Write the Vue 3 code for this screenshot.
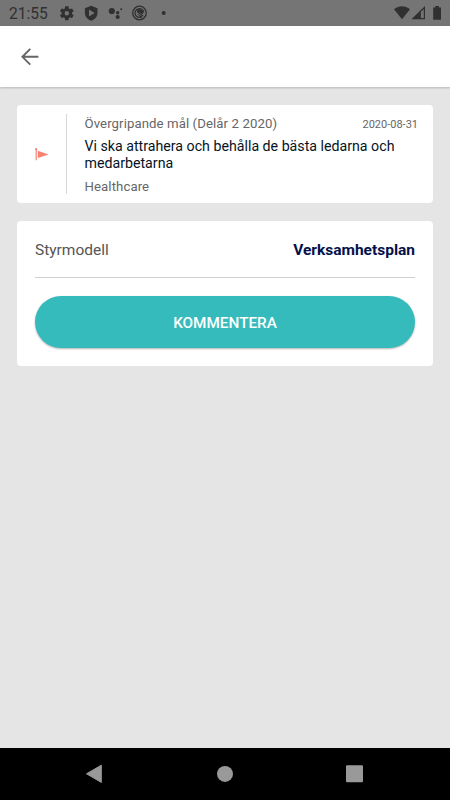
<script setup>
import { ref } from 'vue'

const goal = ref({
    period: 'Övergripande mål (Delår 2 2020)',
    date: '2020-08-31',
    title: 'Vi ska attrahera och behålla de bästa ledarna och medarbetarna',
    unit: 'Healthcare'
})

const details = ref([
    { label: 'Styrmodell', value: 'Verksamhetsplan' }
])
</script>

<template>
    <div class="screen">
        <div class="status-bar">
            <span class="clock">21:55</span>
            <svg class="status-left" width="112" height="26" viewBox="60 0 112 26">
                <!-- settings -->
                <g transform="translate(58.2 4.6) scale(0.72)">
                    <path fill-rule="evenodd" d="M19.14 12.94c.04-.3.06-.61.06-.94s-.02-.64-.07-.94l2.03-1.58a.49.49 0 0 0 .12-.61l-1.92-3.32a.49.49 0 0 0-.59-.22l-2.39.96a7 7 0 0 0-1.62-.94l-.36-2.54a.48.48 0 0 0-.48-.41h-3.84a.47.47 0 0 0-.47.41l-.36 2.54c-.59.24-1.13.57-1.62.94l-2.39-.96a.47.47 0 0 0-.59.22L2.74 8.87a.47.47 0 0 0 .12.61l2.03 1.58a6 6 0 0 0 0 1.88l-2.03 1.58a.49.49 0 0 0-.12.61l1.92 3.32c.12.22.37.29.59.22l2.39-.96c.5.38 1.03.7 1.62.94l.36 2.54c.05.24.24.41.48.41h3.84c.24 0 .44-.17.47-.41l.36-2.54c.59-.24 1.13-.56 1.62-.94l2.39.96c.22.08.47 0 .59-.22l1.92-3.32a.47.47 0 0 0-.12-.61zM12 15.1a3.1 3.1 0 1 1 0-6.2 3.1 3.1 0 0 1 0 6.2z" />
                </g>
                <!-- play protect -->
                <path fill-rule="evenodd" d="M91.2 5.7 97.5 8.2V13c0 3.8-2.7 6.4-6.3 7.7-3.6-1.3-6.3-3.9-6.3-7.7V8.2zM89 9.5v7l5.6-3.5z" />
                <!-- assistant -->
                <circle cx="111.8" cy="11" r="3.1" />
                <circle cx="117.7" cy="12.7" r="1.7" />
                <circle cx="117.7" cy="17" r="2.1" />
                <circle cx="121.2" cy="9.3" r="1" />
                <!-- no sync -->
                <circle cx="139.5" cy="13" r="6.8" fill="none" stroke="#303030" stroke-width="1.3" />
                <path d="M141.6 16.9a4.4 4.4 0 1 1 2.2-4.6" fill="none" stroke="#303030" stroke-width="1.3" />
                <path d="M136.8 10.9a3.4 3.4 0 0 1 5.9 3.4zM136.6 13.2l5.6 3.6-1.2 1z" />
                <path d="m137.2 11.5 6 4.7" fill="none" stroke="#303030" stroke-width="1.4" />
                <circle cx="163.7" cy="13.1" r="2" />
            </svg>
            <svg class="status-right" width="56" height="26" viewBox="390 0 56 26">
                <path d="M394 9.2c4.8-3.9 11.2-3.9 16 0l-8 10.1z" />
                <path fill-rule="evenodd" d="M425 6v13.3h-13.6zM423.8 9v9.1h-2.9v-6.2z" />
                <path d="M435.3 6h3.6v1.6h2.1v12.2h-7.8V7.6h2.1z" />
            </svg>
        </div>

        <header class="toolbar">
            <button class="back" aria-label="Tillbaka">
                <svg width="18" height="18" viewBox="0 0 18 18">
                    <path d="M17.4 8.8H1.7M9.3.9 1.4 8.8l7.9 7.9" />
                </svg>
            </button>
        </header>

        <main>
            <section class="card goal">
                <div class="flag">
                    <svg width="14" height="13" viewBox="0 0 14 13">
                        <path d="M1.2 1.2v11" fill="none" stroke="#fa8072" stroke-width="1.2" />
                        <circle cx="1.2" cy="1.2" r="1.1" />
                        <path d="M2.8 2.8 13.6 6.6 2.8 9.9z" />
                    </svg>
                </div>
                <div class="goal-text">
                    <div class="goal-top">
                        <span class="period">{{ goal.period }}</span>
                        <span class="date">{{ goal.date }}</span>
                    </div>
                    <h1>{{ goal.title }}</h1>
                    <span class="unit">{{ goal.unit }}</span>
                </div>
            </section>

            <section class="card details">
                <div v-for="d in details" :key="d.label" class="detail-row">
                    <span>{{ d.label }}</span>
                    <strong>{{ d.value }}</strong>
                </div>
                <button class="comment-btn">KOMMENTERA</button>
            </section>
        </main>

        <nav class="nav-bar">
            <svg width="450" height="53" viewBox="0 0 450 53">
                <path d="M86.5 25.8 101.3 17.2v17.2z" stroke="#999" stroke-linejoin="round" />
                <circle cx="225" cy="25.9" r="8" />
                <rect x="346" y="17.3" width="17" height="17" rx="1" />
            </svg>
        </nav>
    </div>
</template>

<style>
body {
    margin: 0;
}
</style>

<style scoped>
.screen {
    display: flex;
    flex-direction: column;
    width: 450px;
    height: 800px;
    overflow: hidden;
    background: #e5e5e5;
    font-family: Roboto, "Liberation Sans", sans-serif;
}

.status-bar {
    display: flex;
    align-items: center;
    flex-shrink: 0;
    box-sizing: border-box;
    height: 26px;
    padding: 0 4px 0 9px;
    background: #757575;
    color: #303030;
    fill: #303030;
}

.clock {
    width: 51px;
    font-size: 15.6px;
    line-height: 26px;
    padding-top: 1px;
}

.status-right {
    margin-left: auto;
}

.toolbar {
    display: flex;
    align-items: center;
    flex-shrink: 0;
    height: 61px;
    padding-left: 21px;
    background: #fff;
    box-shadow: 0 1px 2px rgba(0, 0, 0, 0.2);
}

.back {
    display: flex;
    padding: 0;
    border: 0;
    background: none;
}

.back path {
    fill: none;
    stroke: #666;
    stroke-width: 1.9;
}

main {
    display: flex;
    flex: 1;
    flex-direction: column;
    gap: 18px;
    padding: 18px 17px 0;
}

.card {
    box-sizing: border-box;
    border-radius: 4px;
    background: #fff;
}

.goal {
    display: flex;
    height: 98px;
    padding: 9px 15px 9px 0;
}

.flag {
    display: flex;
    align-items: center;
    box-sizing: border-box;
    width: 50px;
    padding-left: 18px;
    border-right: 1px solid #d8d8d8;
    fill: #fa8072;
}

.goal-text {
    flex: 1;
    padding-left: 17.5px;
    color: #666;
    font-size: 13.2px;
}

.goal-top {
    display: flex;
    align-items: baseline;
    justify-content: space-between;
    height: 24px;
    line-height: 19px;
}

.period,
.unit {
    letter-spacing: 0.09px;
}

.date {
    font-size: 11px;
}

h1 {
    margin: 0 0 7px;
    color: #061425;
    font-size: 14.2px;
    font-weight: 400;
    line-height: 17px;
    letter-spacing: 0;
}

.unit {
    display: block;
    line-height: 16px;
}

.details {
    height: 145px;
    padding: 0 18px;
}

.detail-row {
    display: flex;
    align-items: center;
    justify-content: space-between;
    box-sizing: border-box;
    height: 57px;
    padding-top: 2px;
    border-bottom: 1px solid #d0d0d0;
    color: #555;
    font-size: 15.5px;
}

.detail-row strong {
    color: #03114a;
    font-weight: 700;
}

.comment-btn {
    display: block;
    width: 100%;
    height: 52px;
    margin-top: 18px;
    padding: 1px 0 0;
    border: 0;
    border-radius: 26px;
    background: #36bbbc;
    box-shadow: 0 1px 2px rgba(0, 0, 0, 0.3);
    color: #fff;
    font: 500 15.3px Roboto, "Liberation Sans", sans-serif;
}

.nav-bar {
    flex-shrink: 0;
    height: 52px;
    background: #000;
    fill: #999;
}

.nav-bar svg {
    display: block;
}
</style>
